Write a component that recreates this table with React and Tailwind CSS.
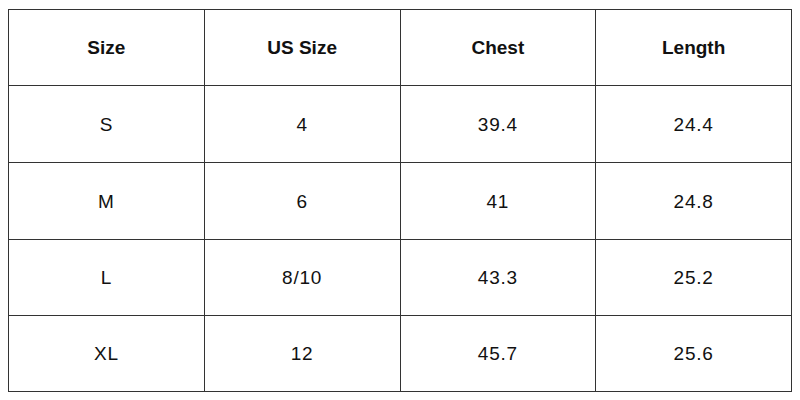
const rows = [
  ['S', '4', '39.4', '24.4'],
  ['M', '6', '41', '24.8'],
  ['L', '8/10', '43.3', '25.2'],
  ['XL', '12', '45.7', '25.6'],
]

const heights = ['h-[77px]', 'h-[77px]', 'h-[76px]', 'h-[76px]']

export default function App() {
  return (
    <div className="w-[800px] h-[400px] bg-white pt-[9px] pl-[8px]" style={{ fontFamily: '"Liberation Sans", Arial, sans-serif' }}>
      <table className="w-[784px] table-fixed border-collapse text-[19px] text-[#111]">
        <thead>
          <tr className="h-[76px]">
            {['Size', 'US Size', 'Chest', 'Length'].map((h) => (
              <th key={h} className="border border-[#333] font-bold text-center pt-[2px]">
                {h}
              </th>
            ))}
          </tr>
        </thead>
        <tbody>
          {rows.map((r, i) => (
            <tr key={i} className={heights[i]}>
              {r.map((c, j) => (
                <td key={j} className="border border-[#333] text-center tracking-[0.8px] pt-[2px]">
                  {c}
                </td>
              ))}
            </tr>
          ))}
        </tbody>
      </table>
    </div>
  )
}
